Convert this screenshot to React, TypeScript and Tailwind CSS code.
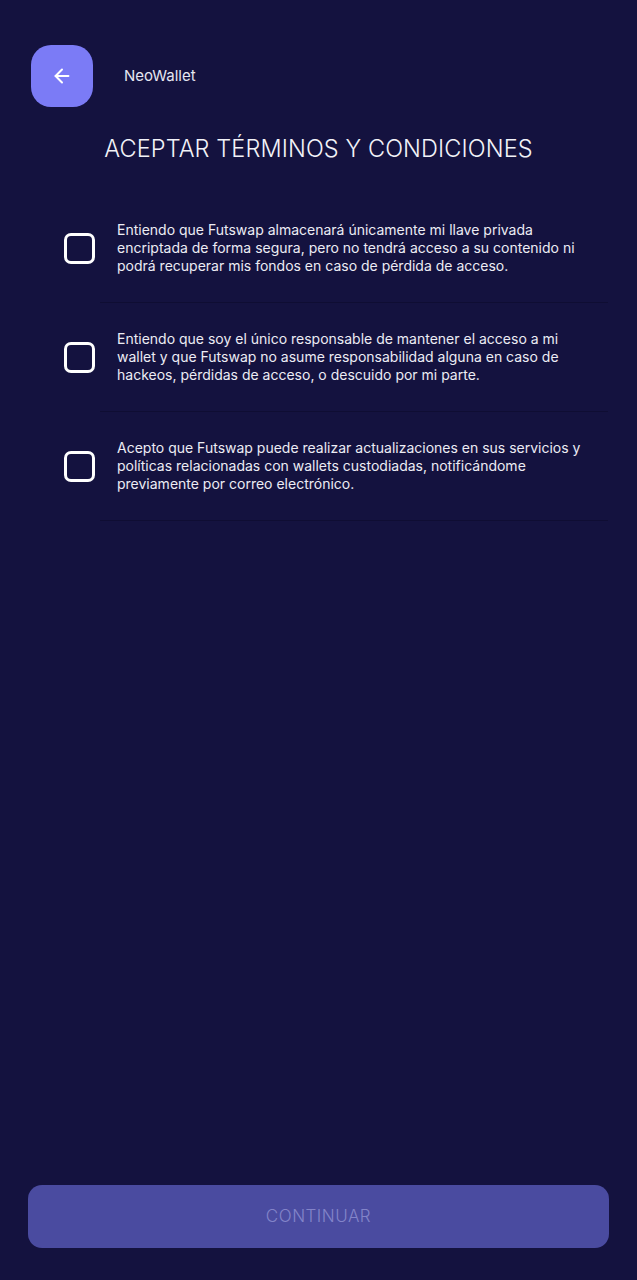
import { ArrowLeft } from "lucide-react";

const terms = [
  "Entiendo que Futswap almacenará únicamente mi llave privada encriptada de forma segura, pero no tendrá acceso a su contenido ni podrá recuperar mis fondos en caso de pérdida de acceso.",
  "Entiendo que soy el único responsable de mantener el acceso a mi wallet y que Futswap no asume responsabilidad alguna en caso de hackeos, pérdidas de acceso, o descuido por mi parte.",
  "Acepto que Futswap puede realizar actualizaciones en sus servicios y políticas relacionadas con wallets custodiadas, notificándome previamente por correo electrónico.",
];

export default function App() {
  return (
    <div
      className="flex min-h-[1280px] flex-col bg-[#14123f] text-white"
      style={{ fontFamily: "Inter, 'Noto Sans', sans-serif" }}
    >
      <header className="flex items-center gap-[31px] pl-[31px] pt-[45px]">
        <button className="flex h-[62px] w-[62px] items-center justify-center rounded-[20px] bg-[#7b7bf6]">
          <ArrowLeft className="h-[22px] w-[22px] text-white" strokeWidth={2.2} />
        </button>
        <span className="text-[15px] text-[#e6e6f2]">NeoWallet</span>
      </header>

      <h1 className="mt-[24px] text-center text-[23.5px] font-light tracking-[0.1px] text-[#f2f2f8]">
        ACEPTAR TÉRMINOS Y CONDICIONES
      </h1>

      <ul className="mt-[28px] flex flex-col">
        {terms.map((term) => (
          <TermRow key={term} text={term} />
        ))}
      </ul>

      <div className="mt-auto px-[28px] pb-[32px]">
        <button
          disabled
          className="flex h-[63px] w-full items-center justify-center rounded-[14px] bg-[#4a4ba0] text-[17px] font-light tracking-[0.5px] text-[#8384c9]"
        >
          CONTINUAR
        </button>
      </div>
    </div>
  );
}

function TermRow({ text }: { text: string }) {
  return (
    <li className="flex items-center pl-[64px] pr-[29px]">
      <span className="h-[31px] w-[31px] shrink-0 rounded-[7px] border-[3px] border-white" />
      <div className="ml-[5px] flex-1 border-b border-[#0f0d33] py-[27px] pl-[17px]">
        <p className="max-w-[474px] text-[14px] leading-[18px] text-[#ececf4]">{text}</p>
      </div>
    </li>
  );
}
